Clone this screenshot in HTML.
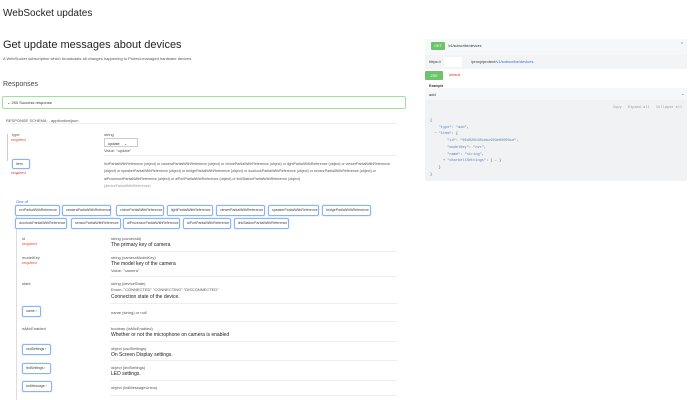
<!DOCTYPE html>
<html><head><style>
*{margin:0;padding:0;box-sizing:border-box}
body{width:690px;height:400px;overflow:hidden;background:#fff;font-family:"Liberation Sans",sans-serif;color:#333;position:relative}
.a{position:absolute;white-space:nowrap}
.s{font-size:4px;color:#555}
.r{color:#e53935}
.btn{position:absolute;border:1px solid #8ab4f8;border-radius:2px;font-size:3.5px;color:#444;height:11px;line-height:9px;padding:0 3px;background:#fff;box-shadow:0 0 1px #8ab4f8}
.hr{position:absolute;height:1px;background:#eee;left:110px;width:287px}
.vl{position:absolute;width:1px;background:#ccc}
.d{font-size:5px;color:#222}
.code{font-family:"Liberation Mono",monospace;font-size:3.6px;position:absolute;white-space:pre;color:#555}
.k{color:#5b7bb5}
</style></head><body>
<div class="a" style="left:3px;top:8px;font-size:10px;color:#222">WebSocket updates</div>
<div class="a" style="left:3px;top:39px;font-size:11px;color:#222;font-weight:500">Get update messages about devices</div>
<div class="a s" style="left:3px;top:56px">A WebSocket subscription which broadcasts all changes happening to Protect-managed hardware devices</div>
<div class="a" style="left:3px;top:81px;font-size:7px;color:#444">Responses</div>
<div class="a" style="left:2px;top:96px;width:404px;height:13px;border:1px solid #9be29b;border-radius:2px"></div>
<div class="a" style="left:7px;top:100px;font-size:4px;color:#333">⌄ 200 Success response</div>
<div class="a s" style="left:6px;top:118px">RESPONSE SCHEMA:&nbsp;&nbsp; application/json</div>
<div class="hr" style="left:6px;width:391px;top:123px"></div>
<div class="vl" style="left:7px;top:134px;height:27px"></div>
<div class="a s" style="left:12px;top:132px">type</div>
<div class="a s r" style="left:11px;top:137px">required</div>
<div class="a s" style="left:104px;top:132px">string</div>
<div class="a" style="left:104px;top:138px;width:34px;height:9px;border:1px solid #ccc;font-size:3.8px;padding:2px 3px;color:#333">update &nbsp;&nbsp;&nbsp;⌄</div>
<div class="a s" style="left:104px;top:148px">Value: "update"</div>
<div class="hr" style="left:104px;width:293px;top:155px"></div>
<div class="btn" style="left:12px;top:159px;height:10px;width:18px">item ⌄</div>
<div class="a s r" style="left:11px;top:170px">required</div>
<div class="a" style="left:104px;top:161px;font-size:3.6px;color:#555;line-height:7.3px;white-space:normal;width:290px">hvrPartialWithReference (object) or cameraPartialWithReference (object) or chimePartialWithReference (object) or lightPartialWithReference (object) or viewerPartialWithReference (object) or speakerPartialWithReference (object) or bridgePartialWithReference (object) or doorlockPartialWithReference (object) or sensorPartialWithReference (object) or aiProcessorPartialWithReference (object) or aiPortPartialWithReference (object) or linkStationPartialWithReference (object)<br><span style="color:#999">(devicePartialWithReference)</span></div>
<div class="vl" style="left:16px;top:210px;height:190px;background:#ddd"></div>
<div class="a" style="left:16px;top:199px;font-size:4px;color:#3b6ed6">One of</div>
<div class="btn" style="left:15px;top:205px;width:45px">nvrPartialWithReference</div>
<div class="btn" style="left:62px;top:205px;width:49px">cameraPartialWithReference</div>
<div class="btn" style="left:116px;top:205px;width:48px">chimePartialWithReference</div>
<div class="btn" style="left:167px;top:205px;width:46px">lightPartialWithReference</div>
<div class="btn" style="left:216px;top:205px;width:49px">viewerPartialWithReference</div>
<div class="btn" style="left:268px;top:205px;width:51px">speakerPartialWithReference</div>
<div class="btn" style="left:322px;top:205px;width:49px">bridgePartialWithReference</div>
<div class="btn" style="left:15px;top:218px;width:52px">doorlockPartialWithReference</div>
<div class="btn" style="left:71px;top:218px;width:50px">sensorPartialWithReference</div>
<div class="btn" style="left:123px;top:218px;width:57px">aiProcessorPartialWithReference</div>
<div class="btn" style="left:183px;top:218px;width:48px">aiPortPartialWithReference</div>
<div class="btn" style="left:234px;top:218px;width:55px">linkStationPartialWithReference</div>

<div class="a s" style="left:22px;top:236px">id</div><div class="a s r" style="left:22px;top:241px">required</div>
<div class="a s" style="left:111px;top:236px">string (cameraId)</div>
<div class="a d" style="left:111px;top:242px">The primary key of camera</div>
<div class="hr" style="top:251px"></div>
<div class="a s" style="left:22px;top:255px">modelKey</div><div class="a s r" style="left:22px;top:260px">required</div>
<div class="a s" style="left:111px;top:255px">string (cameraModelKey)</div>
<div class="a d" style="left:111px;top:261px">The model key of the camera</div>
<div class="a s" style="left:111px;top:268px">Value: "camera"</div>
<div class="hr" style="top:276px"></div>
<div class="a s" style="left:22px;top:281px">state</div>
<div class="a s" style="left:111px;top:281px">string (deviceState)</div>
<div class="a s" style="left:111px;top:287px">Enum: "CONNECTED" "CONNECTING" "DISCONNECTED"</div>
<div class="a d" style="left:111px;top:294px">Connection state of the device.</div>
<div class="hr" style="top:303px"></div>
<div class="btn" style="left:22px;top:306px;width:19px">name ›</div>
<div class="a s" style="left:111px;top:310px">name (string) or null</div>
<div class="hr" style="top:321px"></div>
<div class="a s" style="left:22px;top:326px">isMicEnabled</div>
<div class="a s" style="left:111px;top:326px">boolean (isMicEnabled)</div>
<div class="a d" style="left:111px;top:332px">Whether or not the microphone on camera is enabled</div>
<div class="hr" style="top:341px"></div>
<div class="btn" style="left:22px;top:344px;width:29px">osdSettings ›</div>
<div class="a s" style="left:111px;top:346px">object (osdSettings)</div>
<div class="a d" style="left:111px;top:352px">On Screen Display settings.</div>
<div class="hr" style="top:360px"></div>
<div class="btn" style="left:22px;top:363px;width:29px">ledSettings ›</div>
<div class="a s" style="left:111px;top:365px">object (ledSettings)</div>
<div class="a d" style="left:111px;top:371px">LED settings.</div>
<div class="hr" style="top:380px"></div>
<div class="btn" style="left:22px;top:381px;width:30px">lcdMessage ›</div>
<div class="a s" style="left:111px;top:385px">object (lcdMessageUnion)</div>
<div class="hr" style="top:395px"></div>

<!-- right -->
<div class="a" style="left:425px;top:39px;width:262px;height:16px;background:#f6f7f8"></div>
<div class="a" style="left:431px;top:42px;width:14px;height:8px;background:#6cc46c;color:#fff;font-size:3.6px;text-align:center;line-height:8px;border-radius:1px">GET</div>
<div class="a" style="left:448px;top:44px;font-size:3.5px;color:#333">/v1/subscribe/devices</div>
<div class="a" style="left:680px;top:42px;font-size:5px;color:#555">⌃</div>
<div class="a" style="left:425px;top:55px;width:262px;height:14px;background:#f2f4f6"></div>
<div class="a" style="left:444px;top:57px;width:18px;height:10px;background:#fff"></div>
<div class="a" style="left:429px;top:59px;font-size:4px;color:#333">https://</div>
<div class="a" style="left:471px;top:59px;font-size:4px;color:#333">/proxy/protect<span style="color:#3b6ed6">/v1/subscribe/devices</span></div>
<div class="a" style="left:425px;top:71px;width:18px;height:9px;background:#6cc46c;color:#fff;font-size:4px;text-align:center;line-height:9px;border-radius:1px">200</div>
<div class="a" style="left:449px;top:73px;font-size:3.8px;color:#e53935">default</div>
<div class="a" style="left:429px;top:84px;font-size:3.5px;color:#333;font-weight:bold">Example</div>
<div class="a" style="left:425px;top:88px;width:262px;height:12px;background:#f6f7f8"></div>
<div class="a" style="left:429px;top:92px;font-size:4px;color:#333">add</div>
<div class="a" style="left:681px;top:91px;font-size:4px;color:#555">⌄</div>
<div class="a" style="left:425px;top:100px;width:262px;height:81px;background:#f1f2f4"></div>
<div class="code" style="left:613px;top:106px;color:#999">Copy   Expand all   Collapse all</div>
<div class="code" style="left:430px;top:118px;line-height:6.7px">{
    <span class="k">"type"</span>: <span class="k">"add"</span>,
  − <span class="k">"item"</span>: {
        <span class="k">"id"</span>: <span class="k">"66d025b301ebc903e00003ce"</span>,
        <span class="k">"modelKey"</span>: <span class="k">"nvr"</span>,
        <span class="k">"name"</span>: <span class="k">"string"</span>,
      + <span class="k">"doorbellSettings"</span>: { … }
    }
}</div>
</body></html>
